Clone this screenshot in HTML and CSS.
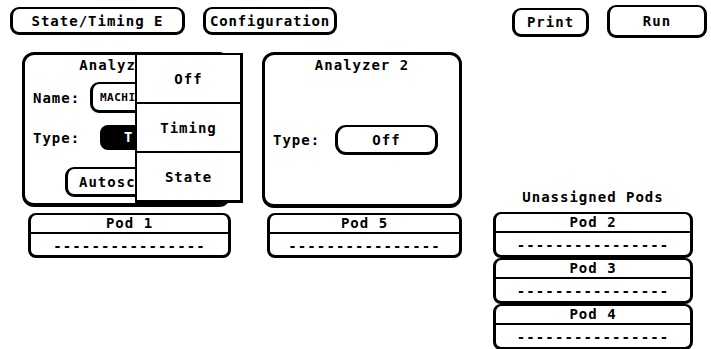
FILE: index.html
```html
<!DOCTYPE html>
<html>
<head>
<meta charset="utf-8">
<link rel="stylesheet" href="styles.css">
</head>
<body>
<div class="screen">
  <div class="topbar">
    <div class="btn b1">State/Timing E</div>
    <div class="btn b2">Configuration</div>
    <div class="btn b3">Print</div>
    <div class="btn b4">Run</div>
  </div>
  <div class="main">
    <div class="col col1">
      <div class="analyzer az1">
        <div class="title">Analyzer 1</div>
        <div class="row row-name">
          <span class="label">Name:</span>
          <div class="btn name-btn">MACHINE 1</div>
        </div>
        <div class="row row-type">
          <span class="label">Type:</span>
          <div class="btn type-btn">T</div>
        </div>
        <div class="row row-auto">
          <div class="btn auto-btn">Autoscale</div>
        </div>
      </div>
      <div class="pod pod1">
        <div class="pod-head">Pod 1</div>
        <div class="pod-body">----------------</div>
      </div>
      <div class="menu">
        <div class="menu-item">Off</div>
        <div class="menu-item">Timing</div>
        <div class="menu-item">State</div>
      </div>
    </div>
    <div class="col col2">
      <div class="analyzer az2">
        <div class="title">Analyzer 2</div>
        <div class="row row-type2">
          <span class="label">Type:</span>
          <div class="btn off-btn">Off</div>
        </div>
      </div>
      <div class="pod pod5">
        <div class="pod-head">Pod 5</div>
        <div class="pod-body">----------------</div>
      </div>
    </div>
    <div class="col col3">
      <div class="unassigned-title">Unassigned Pods</div>
      <div class="pod upod">
        <div class="pod-head">Pod 2</div>
        <div class="pod-body">----------------</div>
      </div>
      <div class="pod upod">
        <div class="pod-head">Pod 3</div>
        <div class="pod-body">----------------</div>
      </div>
      <div class="pod upod">
        <div class="pod-head">Pod 4</div>
        <div class="pod-body">----------------</div>
      </div>
    </div>
  </div>
</div>
</body>
</html>
```
FILE: styles.css
```css
* { box-sizing: border-box; }
html, body { margin: 0; padding: 0; background: #fff; }
.screen {
  position: relative;
  width: 711px;
  height: 349px;
  overflow: hidden;
  background: #fff;
  color: #000;
  font-family: "DejaVu Sans Mono", "Liberation Mono", monospace;
  font-weight: bold;
  font-size: 14px;
  letter-spacing: 1px;
}
.topbar {
  display: flex;
  align-items: flex-start;
  height: 52px;
  padding-left: 10px;
}
.btn {
  display: flex;
  align-items: center;
  justify-content: center;
  border: 2px solid #000;
  border-left-width: 3px;
  border-right-width: 3px;
  border-bottom-width: 3px;
  border-radius: 9px;
  background: #fff;
  white-space: nowrap;
  overflow: hidden;
}
.b1 { margin-top: 7px; width: 175px; height: 28px; }
.b2 { margin-top: 7px; margin-left: 18px; width: 134px; height: 28px; letter-spacing: 0.8px; }
.b3 { margin-top: 8px; margin-left: 175px; width: 77px; height: 29px; }
.b4 { margin-top: 5px; margin-left: 18px; width: 100px; height: 33px; }

.main { display: flex; align-items: flex-start; }
.col { display: flex; flex-direction: column; }
.col1 { position: relative; margin-left: 22px; width: 209px; }
.col2 { margin-left: 31px; width: 200px; }
.col3 { margin-left: 31px; width: 200px; }

.analyzer {
  border: 3px solid #000;
  border-bottom-width: 4px;
  border-radius: 12px;
  background: #fff;
}
.az1 { height: 155px; padding-left: 8px; }
.az2 { height: 156px; padding-left: 8px; }
.title { height: 20px; line-height: 20px; text-align: center; padding-right: 8px; }
.row { display: flex; align-items: center; }
.row-name { margin-top: 7px; }
.row-name .label { width: 57px; }
.name-btn {
  width: 110px; height: 31px;
  justify-content: flex-start;
  padding-left: 7px;
  font-size: 11px;
  letter-spacing: 0.5px;
}
.row-type { margin-top: 12px; }
.row-type .label { width: 67px; }
.type-btn {
  width: 104px; height: 25px;
  background: #000; color: #fff;
  border-radius: 8px;
  justify-content: flex-start;
  padding-left: 21px;
}
.row-auto { margin-top: 17px; padding-left: 32px; }
.auto-btn { width: 112px; height: 30px; justify-content: flex-start; padding-left: 11px; }

.row-type2 { margin-top: 50px; }
.row-type2 .label { width: 62px; }
.off-btn { width: 103px; height: 30px; border-radius: 11px; }

.pod {
  border: 2px solid #000;
  border-left-width: 3px;
  border-right-width: 3px;
  border-bottom-width: 3px;
  border-radius: 8px;
  background: #fff;
  height: 45px;
  display: flex;
  flex-direction: column;
}
.pod-head {
  height: 19px;
  line-height: 17px;
  text-align: center;
  border-bottom: 2px solid #000;
}
.pod-body {
  flex: 1;
  line-height: 20px;
  padding-top: 2px;
  text-align: center;
  letter-spacing: 1.1px;
}
.pod1 { margin-top: 6px; margin-left: 6px; width: 203px; }
.pod5 { margin-top: 5px; margin-left: 5px; width: 195px; }

.unassigned-title {
  margin-top: 137px;
  height: 23px;
  line-height: 16px;
  text-align: center;
}
.upod { width: 200px; height: 46px; }

.menu {
  position: absolute;
  left: 113px;
  top: 1px;
  width: 108px;
  height: 150px;
  border: 2px solid #000;
  border-right-width: 3px;
  border-bottom-width: 3px;
  background: #fff;
  display: flex;
  flex-direction: column;
}
.menu-item {
  flex: 1;
  display: flex;
  align-items: center;
  justify-content: center;
  border-bottom: 2px solid #000;
}
.menu-item:last-child { border-bottom: none; }
```
